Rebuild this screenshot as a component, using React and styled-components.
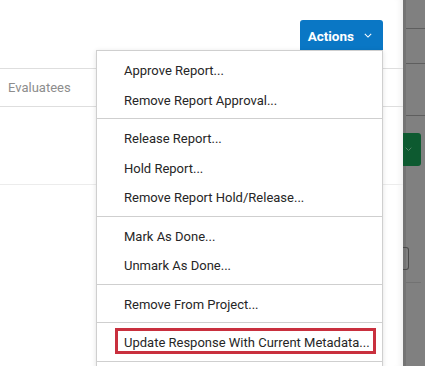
import React from "react";
import styled, { createGlobalStyle } from "styled-components";

const GlobalStyle = createGlobalStyle`
  html, body {
    margin: 0;
    padding: 0;
    background: #fff;
  }
  body {
    font-family: Roboto, "Liberation Sans", sans-serif;
  }
`;

const Page = styled.div`
  display: flex;
  width: 425px;
  height: 366px;
  overflow: hidden;
`;

const Panel = styled.div`
  position: relative;
  width: 403px;
  flex: none;
  background: #fff;
  box-shadow: inset -7px 0 6px -5px rgba(0, 0, 0, 0.07);
`;

const Header = styled.div`
  height: 68px;
  display: flex;
  justify-content: flex-end;
  align-items: flex-start;
  padding: 20px 20px 0 0;
  box-sizing: border-box;
`;

const ActionsButton = styled.button`
  width: 83px;
  height: 31px;
  border: none;
  border-radius: 3px 3px 0 0;
  background: #0a77c5;
  color: #fff;
  font-family: Roboto, "Liberation Sans", sans-serif;
  font-weight: 700;
  font-size: 13.5px;
  display: flex;
  align-items: center;
  justify-content: flex-end;
  gap: 10px;
  padding: 0 11px 0 0;
`;

const TableHead = styled.div`
  height: 37px;
  border-top: 1px solid #dedede;
  border-bottom: 1px solid #dedede;
  display: flex;
  align-items: center;
  padding-left: 8px;
  color: #8d8d8d;
  font-size: 13px;
`;

const Row = styled.div`
  height: 77px;
  border-bottom: 1px solid #ececec;
`;

const Menu = styled.div`
  position: absolute;
  top: 50px;
  left: 96px;
  width: 287px;
  height: 330px;
  box-sizing: border-box;
  background: #fff;
  border: 1px solid #cfcfcf;
  box-shadow: 0 1px 5px rgba(0, 0, 0, 0.12);
`;

const Section = styled.div`
  padding: 4px 0;
  & + & {
    border-top: 1px solid #cfcfcf;
  }
`;

const Item = styled.div`
  position: relative;
  height: 29.5px;
  box-sizing: border-box;
  display: flex;
  align-items: center;
  padding: 2px 0 0 27px;
  font-size: 13px;
  color: #262626;
  white-space: nowrap;

  ${({ $marked }) =>
    $marked &&
    `
    &::after {
      content: "";
      position: absolute;
      left: 18px;
      right: 6px;
      top: 1px;
      bottom: 3px;
      border: 3px solid #c9303e;
    }
  `}
`;

const Overlay = styled.div`
  flex: 1;
  display: flex;
  flex-direction: column;
  background: #808080;
  border-left: 3px solid #747474;
`;

const OverlayLine = styled.div`
  height: 1px;
  flex: none;
  background: ${({ $light }) => ($light ? "#727272" : "#5e5e5e")};
  margin: ${({ $top }) => $top}px ${({ $light }) => ($light ? "4px" : "0")} 0 0;
`;

const GreenButton = styled.div`
  margin-top: ${({ $top }) => $top}px;
  width: 18px;
  height: 33px;
  background: #0d5a30;
  border-radius: 0 3px 3px 0;
  margin-left: -3px;
  display: flex;
  align-items: center;
  padding-left: 2px;
  box-sizing: border-box;
`;

const GhostBox = styled.div`
  margin-top: ${({ $top }) => $top}px;
  margin-left: -3px;
  width: 5px;
  height: 21px;
  border: 1px solid #4a4a4a;
  border-left: none;
  border-radius: 0 3px 3px 0;
`;

const Chevron = ({ color = "#fff", size = 8 }) => (
  <svg width={size} height={size * 0.6} viewBox="0 0 10 6" fill="none">
    <path d="M1 1l4 4 4-4" stroke={color} strokeWidth="1.3" />
  </svg>
);

const sections = [
  ["Approve Report...", "Remove Report Approval..."],
  ["Release Report...", "Hold Report...", "Remove Report Hold/Release..."],
  ["Mark As Done...", "Unmark As Done..."],
  ["Remove From Project..."],
  ["Update Response With Current Metadata..."],
  [""],
];

const App = () => (
  <Page>
    <GlobalStyle />
    <Panel>
      <Header>
        <ActionsButton>
          Actions
          <Chevron />
        </ActionsButton>
      </Header>
      <TableHead>Evaluatees</TableHead>
      <Row />
      <Menu>
        {sections.map((items, i) => (
          <Section key={i}>
            {items.map((label, j) => (
              <Item key={j} $marked={label.startsWith("Update")}>
                {label}
              </Item>
            ))}
          </Section>
        ))}
      </Menu>
    </Panel>
    <Overlay>
      <OverlayLine $top={28} />
      <OverlayLine $top={34} />
      <OverlayLine $top={51} />
      <GreenButton $top={17}>
        <Chevron color="#5d8a70" size={7} />
      </GreenButton>
      <GhostBox $top={81} />
      <OverlayLine $top={12} $light />
    </Overlay>
  </Page>
);

export default App;
